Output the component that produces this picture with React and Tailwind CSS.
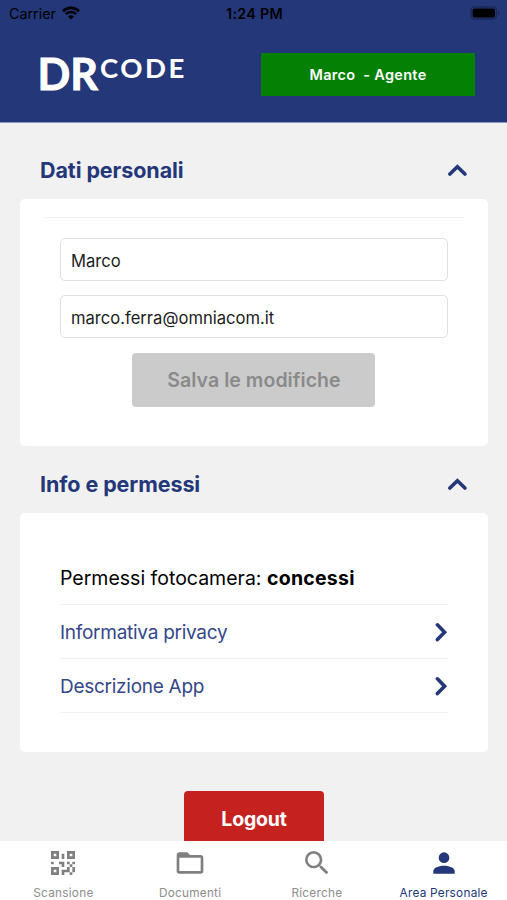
const TABS = [
  {
    label: 'Scansione',
    path: 'M3,11H5V13H3V11M11,5H13V9H11V5M9,11H13V15H11V13H9V11M15,11H17V13H19V11H21V13H19V15H21V19H19V21H17V19H13V21H11V17H15V15H17V13H15V11M19,19V15H17V19H19M15,3H21V9H15V3M17,5V7H19V5H17M3,3H9V9H3V3M5,5V7H7V5H5M3,15H9V21H3V15M5,17V19H7V17H5Z',
  },
  {
    label: 'Documenti',
    path: 'M20,18H4V8H20M20,6H12L10,4H4C2.89,4 2,4.89 2,6V18A2,2 0 0,0 4,20H20A2,2 0 0,0 22,18V8C22,6.89 21.1,6 20,6Z',
  },
  {
    label: 'Ricerche',
    path: 'M9.5,3A6.5,6.5 0 0,1 16,9.5C16,11.11 15.41,12.59 14.44,13.73L14.71,14H15.5L20.5,19L19,20.5L14,15.5V14.71L13.73,14.44C12.59,15.41 11.11,16 9.5,16A6.5,6.5 0 0,1 3,9.5A6.5,6.5 0 0,1 9.5,3M9.5,5C7,5 5,7 5,9.5C5,12 7,14 9.5,14C12,14 14,12 14,9.5C14,7 12,5 9.5,5Z',
  },
  {
    label: 'Area Personale',
    path: 'M12,4A4,4 0 0,1 16,8A4,4 0 0,1 12,12A4,4 0 0,1 8,8A4,4 0 0,1 12,4M12,14C16.42,14 20,15.79 20,18V20H4V18C4,15.79 7.58,14 12,14Z',
    active: true,
  },
]

export default function App() {
  return (
    <div className="flex h-[900px] w-[507px] flex-col overflow-hidden bg-[#f1f1f1] font-['Inter',sans-serif] text-black">
      <header className="h-[123px] shrink-0 border-b border-[#8d97c0] bg-[#233779]">
        <StatusBar />
        <div className="flex items-start justify-between pt-[25px] pr-8 pl-10">
          <Logo />
          <div className="flex h-[43px] w-[214px] items-center justify-center bg-[#048004] text-[14.5px] font-semibold tracking-[0.3px] whitespace-pre text-white">
            Marco  - Agente
          </div>
        </div>
      </header>

      <main className="min-h-0 flex-1 overflow-hidden pr-[19px] pl-5">
        <SectionTitle className="h-[76px] pt-[18px]">Dati personali</SectionTitle>
        <section className="flex h-[247px] flex-col items-center rounded-[5px] bg-white pt-[18px]">
          <div className="h-px w-[421px] bg-[#f2f2f2]" />
          <Field className="mt-[20px]" value="Marco" />
          <Field className="mt-[14px]" value="marco.ferra@omniacom.it" />
          <button className="mt-[15px] mr-px h-[54px] w-[243px] rounded-[4px] bg-[#cbcbcb] pt-[2px] pl-px text-[19.5px] font-semibold tracking-[0.05px] text-[#8a8a8a]">
            Salva le modifiche
          </button>
        </section>

        <SectionTitle className="h-[67px] pt-[9px]">Info e permessi</SectionTitle>
        <section className="h-[239px] rounded-[5px] bg-white px-10 pt-[39px]">
          <p className="flex h-[53px] items-center border-b border-[#f1f1f1] pt-[2px] text-[19.5px] whitespace-pre">
            Permessi fotocamera: <b className="font-bold tracking-[0.25px]">concessi</b>
          </p>
          <Row label="Informativa privacy" />
          <Row label="Descrizione App" />
        </section>

        <button className="mx-auto mt-[39px] block h-[57px] w-[140px] rounded-[4px] bg-[#c5221f] text-[19.5px] font-bold tracking-[-0.2px] text-white">
          Logout
        </button>
      </main>

      <nav className="grid h-[59px] shrink-0 grid-cols-4 bg-white">
        {TABS.map(tab => (
          <Tab key={tab.label} {...tab} />
        ))}
      </nav>
    </div>
  )
}

function StatusBar() {
  return (
    <div className="grid h-[28px] grid-cols-3 items-center pr-[7px] pl-[9px] text-[14.3px]">
      <div className="flex items-center gap-[6px]">
        <span>Carrier</span>
        <svg className="-mt-[2px] h-[14px] w-[18px]" viewBox="0 0 18 14">
          <path d="M1 5.2a11.4 11.4 0 0 1 16 0" fill="none" stroke="black" strokeWidth="2.7" />
          <path d="M3.8 8.2a7.4 7.4 0 0 1 10.4 0" fill="none" stroke="black" strokeWidth="2.4" />
          <path d="M9 13.5 6 10.6a4.3 4.3 0 0 1 6 0z" />
        </svg>
      </div>
      <span className="text-center font-semibold tracking-[0.3px]">1:24 PM</span>
      <svg className="-mt-[2px] h-[14px] w-[30px] justify-self-end" viewBox="0 0 30 14">
        <rect x="1" y="1" width="25.5" height="12" rx="3.5" fill="none" stroke="#192858" strokeWidth="1.4" />
        <rect x="2.6" y="2.6" width="22.4" height="8.8" rx="2" />
        <path d="M28 5v4q1.4-.6 1.4-2T28 5z" fill="#192858" />
      </svg>
    </div>
  )
}

function Logo() {
  return (
    <svg className="h-[43px] w-[150px] overflow-visible font-['Lato',sans-serif]" viewBox="0 0 150 43" fill="white" stroke="white">
      <text x="-2.5" y="36.6" fontSize="43.5" fontWeight="700" strokeWidth="0.9" textLength="60.5" lengthAdjust="spacingAndGlyphs">DR</text>
      <text x="60" y="25" fontSize="27.5" fontWeight="700" strokeWidth="0.1" letterSpacing="2.6" textLength="87" lengthAdjust="spacingAndGlyphs">CODE</text>
    </svg>
  )
}

function SectionTitle({ className, children }) {
  return (
    <div className={`flex justify-between pr-[21px] pl-5 text-[#233779] ${className}`}>
      <h2 className="h-[58px] text-[21.5px] leading-[58px] font-bold tracking-[-0.08px]">{children}</h2>
      <svg className="mt-[22px] h-[14px] w-5" viewBox="0 0 20 14">
        <path d="M2.9 11 10.4 3.7l7.5 7.3" fill="none" stroke="currentColor" strokeWidth="3.6" strokeLinecap="round" />
      </svg>
    </div>
  )
}

function Field({ className, value }) {
  return (
    <input
      className={`h-[43px] w-[388px] shrink-0 rounded-[5px] border-[1.5px] border-[#e0e0e0] px-[10px] pt-[2px] text-[16.6px] text-[#1c1c1c] ${className}`}
      defaultValue={value}
    />
  )
}

function Row({ label }) {
  return (
    <a className="flex h-[54px] items-center justify-between border-b border-[#f1f1f1] text-[19px] tracking-[-0.27px] text-[#33478a]">
      <span className="pt-[3px]">{label}</span>
      <svg className="h-5 w-[14px] text-[#233779]" viewBox="0 0 14 20">
        <path d="M3.4 2.8 10.6 10.2 3.4 17.6" fill="none" stroke="currentColor" strokeWidth="3.6" strokeLinecap="round" />
      </svg>
    </a>
  )
}

function Tab({ label, path, active }) {
  return (
    <a className={`flex flex-col items-center pt-[6px] ${active ? 'text-[#233779]' : 'text-[#808080]'}`}>
      <svg className="size-8" viewBox="0 0 24 24" fill="currentColor">
        <path d={path} />
      </svg>
      <span className={`mt-[5px] text-[11.8px] leading-[18px] tracking-[0.25px] whitespace-nowrap ${active ? '' : 'text-[#8e8e8e]'}`}>
        {label}
      </span>
    </a>
  )
}
